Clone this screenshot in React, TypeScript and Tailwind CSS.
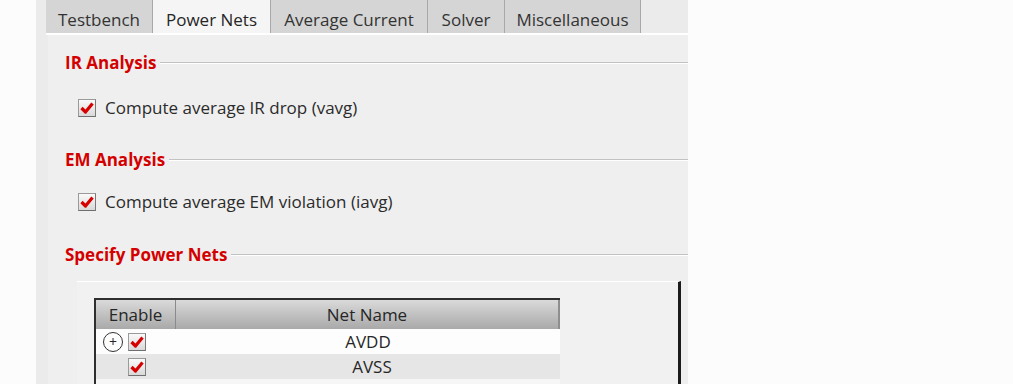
const font = { fontFamily: '"Open Sans", "Noto Sans", sans-serif' };

const tabs = [
  { name: "Testbench", w: "w-[107px]" },
  { name: "Power Nets", w: "w-[118px]" },
  { name: "Average Current", w: "w-[157px]" },
  { name: "Solver", w: "w-[77px]" },
  { name: "Miscellaneous", w: "w-[136px]" },
];

function CheckBox() {
  return (
    <div className="flex h-[18px] w-[18px] items-center justify-center border border-[#9a9a9a] border-b-[#6f6f6f] border-r-[#7a7a7a] bg-gradient-to-b from-[#fafafa] to-[#d9d9d9]">
      <svg width="14" height="12" viewBox="0 0 14 12">
        <path d="M1.5 6 L5.5 10 L12.5 1.5" fill="none" stroke="#d60000" strokeWidth="3.2" strokeLinejoin="round" />
      </svg>
    </div>
  );
}

function Section({ title }: { title: string }) {
  return (
    <div className="flex h-[22px] items-center gap-[4px] pl-[17px]">
      <span className="text-[17px] font-bold text-[#d40000]">{title}</span>
      <div className="h-[2px] flex-1 border-t border-[#c2c2c2] border-b border-b-white" />
    </div>
  );
}

function CheckRow({ label }: { label: string }) {
  return (
    <div className="flex h-[24px] items-center gap-[9px] pl-[30px]">
      <CheckBox />
      <span className="text-[17px] text-[#2b2b2b]">{label}</span>
    </div>
  );
}

export default function App() {
  return (
    <div className="flex h-[384px] w-[1013px] bg-[#fcfcfc]" style={font}>
      <div className="w-[36px]" />
      <div className="flex w-[652px] flex-col bg-[#ebebeb] pl-[10px]">
        {/* Tabs */}
        <div className="flex h-[33px] shrink-0 items-stretch">
          {tabs.map((t) => (
            <div
              key={t.name}
              className={
                t.name === "Power Nets"
                  ? `flex ${t.w} items-center justify-center border-r border-[#a8a8a8] bg-[#f5f5f5] pt-[6px] text-[17px] text-[#262626]`
                  : `flex ${t.w} items-center justify-center border-r border-[#a8a8a8] bg-[#d5d5d5] pt-[6px] text-[17px] text-[#333]`
              }
            >
              {t.name}
            </div>
          ))}
        </div>
        <div className="h-[2px] shrink-0 bg-white" />
        {/* Content pane */}
        <div className="ml-[2px] flex flex-1 flex-col bg-[#efefef]">
          <div className="mt-[17px]">
            <Section title="IR Analysis" />
          </div>
          <div className="mt-[22px]">
            <CheckRow label="Compute average IR drop (vavg)" />
          </div>
          <div className="mt-[29px]">
            <Section title="EM Analysis" />
          </div>
          <div className="mt-[19px]">
            <CheckRow label="Compute average EM violation (iavg)" />
          </div>
          <div className="mt-[30px]">
            <Section title="Specify Power Nets" />
          </div>
          {/* Sub panel */}
          <div className="ml-[29px] mr-[7px] mt-[15px] flex-1 border-t border-white border-r-[3px] border-r-[#1c1c1c] bg-[#f1f1f1] pl-[17px] pt-[16px]">
            <div className="w-[466px] border-l-2 border-t-2 border-[#2e2e2e] bg-white">
              <div className="flex h-[29px] bg-gradient-to-b from-[#dadada] to-[#a9a9a9] text-[17px] text-[#262626]">
                <div className="flex w-[80px] items-center justify-center border-r border-[#8a8a8a]">Enable</div>
                <div className="flex flex-1 items-center justify-center border-r-2 border-[#8e8e8e]">Net Name</div>
              </div>
              <div className="flex h-[25px] items-center bg-[#fdfdfd] text-[17px] text-[#262626]">
                <div className="flex w-[80px] items-center gap-[5px] pl-[7px]">
                  <div className="flex h-[20px] w-[20px] items-center justify-center rounded-full border border-[#333] text-[14px] leading-none">
                    +
                  </div>
                  <CheckBox />
                </div>
                <div className="flex-1 text-center">AVDD</div>
              </div>
              <div className="flex h-[25px] items-center bg-[#e6e6e6] text-[17px] text-[#262626]">
                <div className="flex w-[80px] items-center pl-[32px]">
                  <CheckBox />
                </div>
                <div className="flex-1 pl-[8px] text-center">AVSS</div>
              </div>
              <div className="h-[10px] bg-[#f6f6f6]" />
            </div>
          </div>
        </div>
      </div>
    </div>
  );
}
